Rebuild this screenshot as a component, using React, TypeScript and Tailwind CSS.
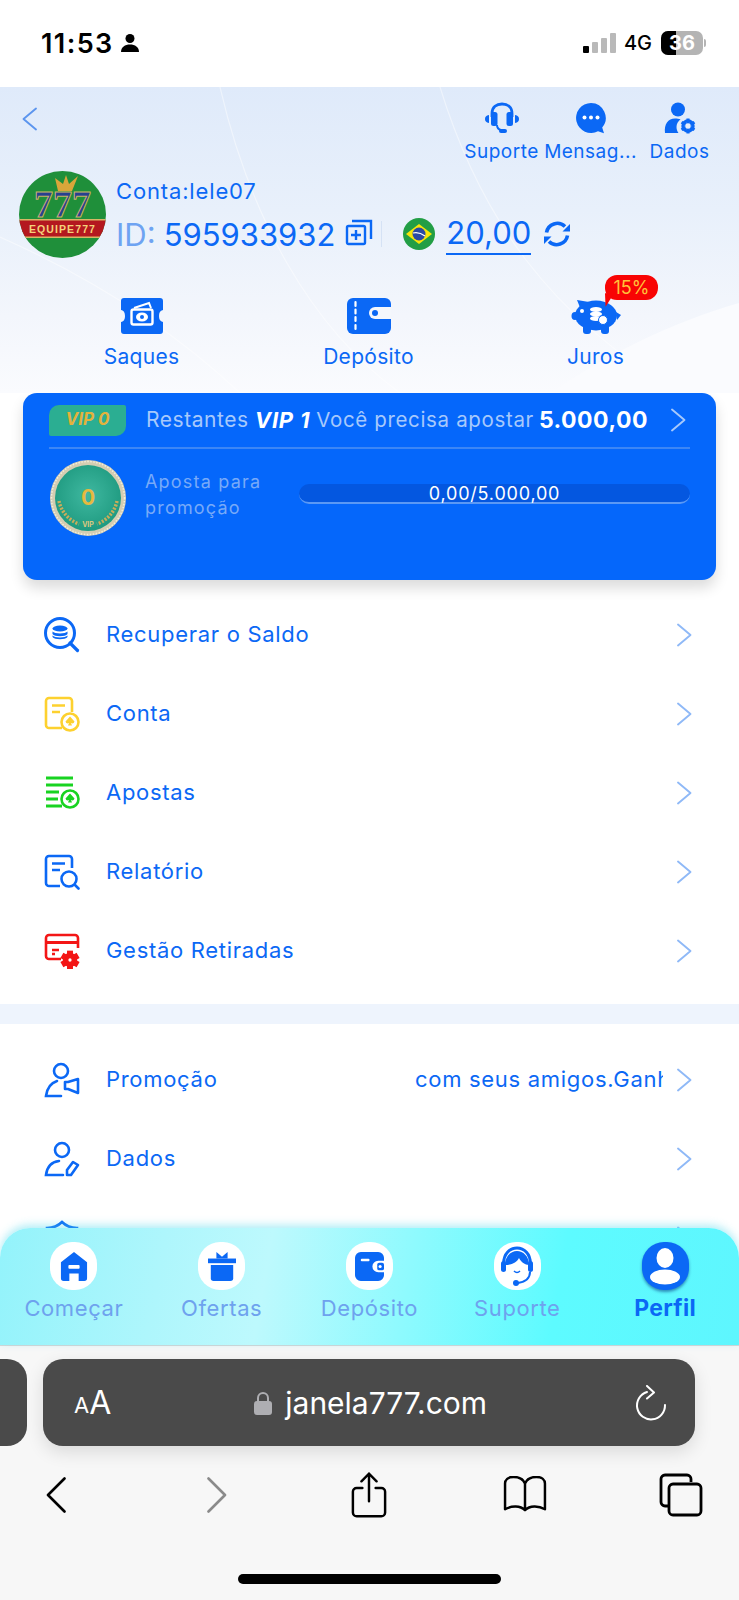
import type { ReactNode } from "react";

const BLUE = "#0b68f5";

function Chev({ dir = "right", className = "" }: { dir?: "left" | "right"; className?: string }) {
  return (
    <svg viewBox="0 0 16 24" className={`h-[24px] w-[16px] shrink-0 ${className}`} fill="none" stroke="currentColor" strokeWidth="1.900" strokeLinecap="round" strokeLinejoin="round">
      <path d={dir === "right" ? "M2 1.500L14.500 12 2 22.500" : "M14 1.500L1.500 12 14 22.500"} />
    </svg>
  );
}

function Headset() {
  return (
    <svg viewBox="0 0 36 32" className="h-[32px] w-[36px]" fill={BLUE}>
      <path d="M8 15V11.500C8 5 12.500 2 18 2s10 3 10 9.500V15" fill="none" stroke={BLUE} strokeWidth="2.800" />
      <rect x="7" y="10" width="6.500" height="14" rx="2.500" />
      <rect x="22.500" y="10" width="6.500" height="14" rx="2.500" />
      <path d="M1 17c0-2 1-3.500 4-4v8c-3-.5-4-2-4-4zM35 17c0-2-1-3.500-4-4v8c3-.5 4-2 4-4z" />
      <path d="M13 23c0 3 2 4.500 4 5" fill="none" stroke={BLUE} strokeWidth="2" />
      <rect x="15" y="27" width="8" height="4" rx="2" />
    </svg>
  );
}

function Bubble() {
  return (
    <svg viewBox="0 0 32 32" className="h-[32px] w-[32px]">
      <path d="M16 1a15 15 0 1 0 7 28.300l6 1.900-1.800-5.600A15 15 0 0 0 16 1z" fill={BLUE} />
      <circle cx="9.500" cy="15.500" r="2" fill="#fff" />
      <circle cx="16" cy="15.500" r="2" fill="#fff" />
      <circle cx="22.500" cy="15.500" r="2" fill="#fff" />
    </svg>
  );
}

function Gear({ x, y, r, color = BLUE, hole = "#e6eefa" }: { x: number; y: number; r: number; color?: string; hole?: string }) {
  return (
    <g>
      <circle cx={x} cy={y} r={r * 0.78} fill="none" stroke={color} strokeWidth={r * 0.5} />
      {[0, 60, 120].map((a) => (
        <rect key={a} x={x - r * 0.24} y={y - r * 1.15} width={r * 0.48} height={r * 2.3} fill={color} transform={`rotate(${a} ${x} ${y})`} />
      ))}
      <circle cx={x} cy={y} r={r * 0.42} fill={hole} />
    </g>
  );
}

function UserGear() {
  return (
    <svg viewBox="0 0 32 32" className="h-[32px] w-[32px]">
      <circle cx="14" cy="7.500" r="7" fill={BLUE} />
      <path d="M1 31c-1-9 3-14.500 10-14.500 2 0 4 .2 5.500.8-2.500 2-4 4.700-4 7.700 0 2.300.8 4.500 2 6z" fill={BLUE} />
      <Gear x={24} y={24} r={6.500} />
    </svg>
  );
}

function Copy() {
  return (
    <svg viewBox="0 0 28 28" className="h-[28px] w-[28px]" fill="none" stroke={BLUE} strokeWidth="2.400">
      <rect x="2" y="8" width="18" height="18" rx="1.500" />
      <path d="M7 3h19v18" />
      <path d="M11 12v10M6 17h10" />
    </svg>
  );
}

function Flag() {
  return (
    <svg viewBox="0 0 32 32" className="h-[32px] w-[32px]">
      <circle cx="16" cy="16" r="16" fill="#229e45" />
      <path d="M16 6l13 10-13 10L3 16z" fill="#f8e509" />
      <circle cx="16" cy="16" r="6.500" fill="#2b49a3" />
      <path d="M10 15c4-1 8 0 12 3" stroke="#fff" strokeWidth="1.200" fill="none" />
    </svg>
  );
}

function Refresh() {
  return (
    <svg viewBox="0 0 28 28" className="h-[28px] w-[28px]" fill="none" stroke={BLUE} strokeWidth="3.600">
      <path d="M3.500 12.500A11 11 0 0 1 22 6.500" />
      <path d="M24.500 15.500A11 11 0 0 1 6 21.500" />
      <path d="M27 4v7.500h-7.500z" fill={BLUE} stroke="none" />
      <path d="M1 24V16.500h7.500z" fill={BLUE} stroke="none" />
    </svg>
  );
}

function Avatar() {
  return (
    <svg viewBox="0 0 87 87" className="h-[87px] w-[87px] shrink-0">
      <defs>
        <clipPath id="avatar-clip">
          <circle cx="43.500" cy="43.500" r="43.500" />
        </clipPath>
      </defs>
      <g clipPath="url(#avatar-clip)">
        <rect width="87" height="87" fill="#1f8f3a" />
        <path d="M39 20l-3-13 8 6 3-9 3 9 9-8-6 15z" fill="#d9a63a" />
        <text x="43.500" y="46" textAnchor="middle" fontFamily="'Liberation Serif', serif" fontWeight="700" fontSize="38" fill="#27408f" stroke="#c9b368" strokeWidth="1">
          777
        </text>
        <rect x="0" y="49" width="87" height="17" fill="#b4181f" />
        <rect x="0" y="48" width="87" height="1.500" fill="#d7b765" />
        <rect x="0" y="65.500" width="87" height="1.500" fill="#d7b765" />
        <text x="43.500" y="61.500" textAnchor="middle" fontFamily="'Liberation Sans', sans-serif" fontWeight="700" fontSize="10.500" letterSpacing="1.100" fill="#f4d27a">
          EQUIPE777
        </text>
      </g>
    </svg>
  );
}

function Ticket() {
  return (
    <svg viewBox="0 0 44 36" className="h-[36px] w-[44px]">
      <path d="M4 0h36a3 3 0 0 1 3 3v9c-3 .5-4 3-4 6s1 5.500 4 6v9a3 3 0 0 1-3 3H4a3 3 0 0 1-3-3v-9c3-.5 4-3 4-6s-1-5.500-4-6V3a3 3 0 0 1 3-3z" fill={BLUE} />
      <path d="M14 10l15-5 2 5" fill="none" stroke="#fff" strokeWidth="2" />
      <rect x="11.500" y="11.500" width="21" height="15" rx="2" fill={BLUE} stroke="#fff" strokeWidth="2.400" />
      <ellipse cx="22" cy="19" rx="6" ry="4.500" fill="#fff" />
      <circle cx="22" cy="19" r="2" fill={BLUE} />
    </svg>
  );
}

function WalletIcon() {
  return (
    <svg viewBox="0 0 44 36" className="h-[36px] w-[44px]">
      <rect width="44" height="36" rx="6" fill={BLUE} />
      <path d="M44 9H28a6 6 0 0 0 0 12h16z" fill="#f4f7fc" />
      <circle cx="28" cy="15" r="3" fill={BLUE} />
      <path d="M8.500 4v4M8.500 11.500v4M8.500 19v4M8.500 27v4" stroke="#fff" strokeWidth="2.200" strokeLinecap="round" />
    </svg>
  );
}

function Piggy() {
  return (
    <svg viewBox="0 0 50 38" className="h-[38px] w-[50px]">
      <ellipse cx="25" cy="18.500" rx="21" ry="15" fill={BLUE} />
      <path d="M6 3l12 2-8 8z" fill={BLUE} />
      <rect x="12" y="26" width="8" height="11" rx="3" fill={BLUE} />
      <rect x="30" y="26" width="8" height="11" rx="3" fill={BLUE} />
      <ellipse cx="4" cy="19" rx="3.500" ry="4" fill={BLUE} />
      <path d="M45 15l5 3-4 5z" fill={BLUE} />
      <circle cx="11" cy="14" r="2" fill="#fff" />
      <ellipse cx="25" cy="12.500" rx="6" ry="2.400" fill="#fff" />
      <ellipse cx="25" cy="17" rx="6" ry="2.400" fill="#fff" />
      <ellipse cx="25" cy="21.500" rx="6" ry="2.400" fill="#fff" />
      <circle cx="32" cy="23" r="4.500" fill="#fff" stroke={BLUE} strokeWidth="1" />
    </svg>
  );
}

function Medal() {
  return (
    <svg viewBox="0 0 78 78" className="h-[78px] w-[78px] shrink-0">
      <defs>
        <radialGradient id="medal-fill" cx="50%" cy="45%" r="55%">
          <stop offset="0%" stopColor="#3fb8a0" />
          <stop offset="100%" stopColor="#1f9a80" />
        </radialGradient>
      </defs>
      <circle cx="39" cy="39" r="38" fill="#d4cdb2" />
      <circle cx="39" cy="39" r="36.500" fill="none" stroke="#f3eedd" strokeWidth="1.500" strokeDasharray="1.500 1.500" />
      <circle cx="39" cy="39" r="33" fill="url(#medal-fill)" />
      <path d="M10 42c2 10 9 19 20 23M68 42c-2 10-9 19-20 23" fill="none" stroke="#c9ad5a" strokeWidth="3.500" strokeDasharray="2 1.500" />
      <text x="39" y="46" textAnchor="middle" fontFamily="Inter, sans-serif" fontWeight="700" fontSize="21" fill="#e6b93f">
        0
      </text>
      <text x="39" y="68" textAnchor="middle" fontFamily="Inter, sans-serif" fontWeight="700" fontSize="7" fill="#d9c77f">
        VIP
      </text>
    </svg>
  );
}

function IconSearchCoins() {
  return (
    <svg viewBox="0 0 36 36" className="h-[36px] w-[36px]" fill="none" stroke={BLUE}>
      <circle cx="16" cy="16" r="14.500" strokeWidth="3" />
      <path d="M26 26l7.500 7.500" strokeWidth="3.200" strokeLinecap="round" />
      <ellipse cx="16" cy="11.500" rx="7.500" ry="3" fill={BLUE} stroke="none" />
      <path d="M8.500 14.500c2 2.500 13 2.500 15 0v2.500c-2 3-13 3-15 0zM8.500 18.500c2 2.500 13 2.500 15 0V20c-2 3-13 3-15 0z" fill={BLUE} stroke="none" />
    </svg>
  );
}

function Spade({ x, y, color }: { x: number; y: number; color: string }) {
  return <path d={`M${x} ${y - 4.500}l4.500 5a2.500 2.500 0 0 1-3.500 1.500l1 2.500h-4l1-2.500a2.500 2.500 0 0 1-3.500-1.500z`} fill={color} stroke="none" />;
}

function IconDocCoin() {
  const c = "#fdd12f";
  return (
    <svg viewBox="0 0 36 36" className="h-[36px] w-[36px]" fill="none" stroke={c} strokeWidth="2.600">
      <path d="M18 32H5a3 3 0 0 1-3-3V5a3 3 0 0 1 3-3h20a3 3 0 0 1 3 3v11" />
      <path d="M8 9.500h13M8 16h8" />
      <circle cx="26" cy="26" r="8.500" />
      <Spade x={26} y={25} color={c} />
    </svg>
  );
}

function IconListCoin() {
  const c = "#18d321";
  return (
    <svg viewBox="0 0 36 36" className="h-[36px] w-[36px]" fill="none" stroke={c} strokeWidth="3">
      <path d="M2 3h27M2 10h27M2 17h13M2 24h12M2 31h16" />
      <circle cx="26" cy="24" r="8.500" strokeWidth="2.600" />
      <Spade x={26} y={23} color={c} />
    </svg>
  );
}

function IconDocSearch() {
  return (
    <svg viewBox="0 0 36 36" className="h-[36px] w-[36px]" fill="none" stroke={BLUE} strokeWidth="2.600">
      <path d="M16 32H5a3 3 0 0 1-3-3V5a3 3 0 0 1 3-3h20a3 3 0 0 1 3 3v9" />
      <path d="M8 9.500h13M8 16h8" />
      <circle cx="25" cy="25" r="7.500" />
      <path d="M31 31l3.500 3.500" strokeLinecap="round" />
    </svg>
  );
}

function IconCardGear() {
  const c = "#f31616";
  return (
    <svg viewBox="0 0 36 36" className="h-[36px] w-[36px]" fill="none" stroke={c} strokeWidth="2.600">
      <path d="M17 26H5a3 3 0 0 1-3-3V5a3 3 0 0 1 3-3h26a3 3 0 0 1 3 3v10" />
      <path d="M2 9.500h32" strokeWidth="3" />
      <path d="M8 17h7M8 21h3" />
      <Gear x={26} y={27} r={7} color={c} hole="#fff" />
    </svg>
  );
}

function IconUserHorn() {
  return (
    <svg viewBox="0 0 36 36" className="h-[36px] w-[36px]" fill="none" stroke={BLUE} strokeWidth="2.600">
      <circle cx="17" cy="9" r="7" />
      <path d="M13 19c-6 2-10 7-11 15h15" strokeLinecap="round" />
      <path d="M24 20l10-3v14l-10-4h-3v-7z" strokeLinejoin="round" />
    </svg>
  );
}

function IconUserPen() {
  return (
    <svg viewBox="0 0 36 36" className="h-[36px] w-[36px]" fill="none" stroke={BLUE} strokeWidth="2.600">
      <circle cx="18" cy="9" r="7" />
      <path d="M15 20C7 21 3 26 2 34h17" strokeLinecap="round" />
      <path d="M29 21l5 3-7 10h-4v-5z" strokeLinejoin="round" />
    </svg>
  );
}

function IconShield() {
  return (
    <svg viewBox="0 0 36 36" className="h-[36px] w-[36px]" fill="none" stroke={BLUE} strokeWidth="2.600">
      <path d="M3 8c6 0 11-2 15-6 4 4 9 6 15 6v12c0 8-7 12-15 15C10 32 3 28 3 20z" />
    </svg>
  );
}

function Row({ icon, label, extra }: { icon: ReactNode; label?: string; extra?: ReactNode }) {
  return (
    <div className="flex h-[79px] items-center pl-[44px] pr-[47px]">
      <div className="w-[62px] shrink-0">{icon}</div>
      {label && <span className="text-[22px] tracking-[0.7px] text-[#0b68f5]">{label}</span>}
      <div className="min-w-0 flex-1">{extra}</div>
      <Chev className="text-[#8fb9f7]" />
    </div>
  );
}

function HeaderAction({ icon, label }: { icon: ReactNode; label: string }) {
  return (
    <div className="flex w-[89px] flex-col items-center">
      {icon}
      <span className="mt-[6px] whitespace-nowrap text-[19px] leading-[24px] tracking-[0.5px]">{label}</span>
    </div>
  );
}

function QuickAction({ icon, label, children }: { icon: ReactNode; label: string; children?: ReactNode }) {
  return (
    <div className="relative flex flex-col items-center">
      <div className="flex h-[36px] items-center">{icon}</div>
      <span className="mt-[9px] text-[21px] leading-[28px] tracking-[0.3px]">{label}</span>
      {children}
    </div>
  );
}

const navItems: { label: string; icon: ReactNode }[] = [
  {
    label: "Começar",
    icon: (
      <svg viewBox="0 0 30 32" className="h-[30px] w-[28px]" fill={BLUE}>
        <path d="M15 1l14 11v17a3 3 0 0 1-3 3h-6v-8H10v8H4a3 3 0 0 1-3-3V12z" />
        <rect x="9" y="15" width="12" height="4" rx="1" fill="#fff" />
      </svg>
    ),
  },
  {
    label: "Ofertas",
    icon: (
      <svg viewBox="0 0 30 32" className="h-[30px] w-[28px]" fill={BLUE}>
        <path d="M9 1l6 5 6-5v7H9z" />
        <rect x="0" y="8" width="30" height="5" />
        <path d="M3 15h24v14a3 3 0 0 1-3 3H6a3 3 0 0 1-3-3z" />
      </svg>
    ),
  },
  {
    label: "Depósito",
    icon: (
      <svg viewBox="0 0 30 30" className="h-[29px] w-[29px]" fill={BLUE}>
        <path d="M6 0h18a6 6 0 0 1 6 6v3h-6a6 6 0 0 0 0 12h6v3a6 6 0 0 1-6 6H6a6 6 0 0 1-6-6V6a6 6 0 0 1 6-6z" />
        <rect x="6" y="7" width="9" height="2.500" rx="1" fill="#fff" />
        <rect x="23" y="11" width="7" height="8" rx="2" />
        <circle cx="26" cy="15" r="1.600" fill="#fff" />
      </svg>
    ),
  },
  {
    label: "Suporte",
    icon: (
      <svg viewBox="0 0 40 42" className="h-[42px] w-[40px]">
        <path d="M7 22C5 8 14 3 20 3s15 5 13 19" fill="none" stroke={BLUE} strokeWidth="3" />
        <path d="M8 20c0-9 6-14 12-14s12 5 12 14c-4 0-8-3-10-7-2 4-7 7-14 7z" fill={BLUE} />
        <rect x="4" y="16" width="5" height="11" rx="2.500" fill={BLUE} />
        <rect x="31" y="16" width="5" height="11" rx="2.500" fill={BLUE} />
        <path d="M33 27c0 7-6 10-12 11" fill="none" stroke={BLUE} strokeWidth="2" />
        <circle cx="19" cy="38" r="3" fill={BLUE} />
        <path d="M17 26c2 2 4 2 6 0" fill="none" stroke={BLUE} strokeWidth="1.500" />
      </svg>
    ),
  },
  {
    label: "Perfil",
    icon: (
      <svg viewBox="0 0 36 40" className="h-[40px] w-[36px]" fill="#fff">
        <ellipse cx="18" cy="12" rx="8.500" ry="10" />
        <ellipse cx="18" cy="31" rx="15" ry="7.500" />
      </svg>
    ),
  },
];

export default function App() {
  return (
    <div className="flex h-[1600px] w-[739px] flex-col overflow-hidden bg-white font-['Inter',sans-serif] text-[#0b68f5]">
      {/* status bar */}
      <div className="flex h-[87px] shrink-0 items-center pb-[1px] pl-[41px] pr-[33px] text-black">
        <span className="text-[27px] font-semibold leading-none tracking-[1.400px]">11:53</span>
        <svg viewBox="0 0 20 20" className="ml-[6px] h-[20px] w-[20px]" fill="#000">
          <circle cx="10" cy="5.500" r="4.500" />
          <path d="M1 19c0-5 4-7.500 9-7.500s9 2.500 9 7.500z" />
        </svg>
        <div className="flex-1" />
        <div className="flex h-[20px] items-end gap-[3px]">
          <div className="h-[7px] w-[6px] rounded-[1px] bg-black" />
          <div className="h-[11px] w-[6px] rounded-[1px] bg-[#b9b9b9]" />
          <div className="h-[15px] w-[6px] rounded-[1px] bg-[#b9b9b9]" />
          <div className="h-[20px] w-[6px] rounded-[1px] bg-[#b9b9b9]" />
        </div>
        <span className="ml-[8px] text-[20px] font-medium leading-none">4G</span>
        <div className="relative ml-[9px] flex h-[24px] w-[42px] items-center justify-center overflow-hidden rounded-[7px] bg-[#b4b4b4] text-[20px] font-bold leading-none text-white">
          <div className="absolute inset-y-0 left-0 w-[15px] bg-black" />
          <span className="relative">36</span>
        </div>
        <div className="ml-[1px] h-[8px] w-[2px] rounded-r-full bg-[#b4b4b4]" />
      </div>

      {/* scrolling content */}
      <div className="h-[1173px] shrink-0 overflow-hidden">
        <div className="relative flex h-[306px] flex-col bg-[linear-gradient(180deg,#dfeafa_0%,#e8f0fb_40%,#f3f6fc_75%,#fafbfe_100%)]">
          <svg viewBox="0 0 739 306" className="pointer-events-none absolute inset-0 h-full w-full" fill="none">
            <path d="M220 0c30 130 90 240 180 306" stroke="#ffffff" strokeOpacity="0.45" strokeWidth="1.200" />
            <path d="M440 0c40 130 110 230 240 306" stroke="#ffffff" strokeOpacity="0.45" strokeWidth="1.200" />
            <path d="M0 150c90 40 170 90 240 156" stroke="#ffffff" strokeOpacity="0.45" strokeWidth="1.200" />
            <path d="M550 306c60-40 120-70 189-90v90z" fill="#fafbfe" />
          </svg>

          <div className="relative flex h-[84px] shrink-0 justify-between pl-[22px] pr-[15px] pt-[15px]">
            <Chev dir="left" className="mt-[5px] text-[#5c95ee]" />
            <div className="flex">
              <HeaderAction icon={<Headset />} label="Suporte" />
              <HeaderAction icon={<Bubble />} label="Mensag..." />
              <HeaderAction icon={<UserGear />} label="Dados" />
            </div>
          </div>

          <div className="relative flex shrink-0 items-start pl-[19px]">
            <Avatar />
            <div className="ml-[10px] mt-[5px] flex flex-col">
              <span className="text-[22px] leading-[30px] tracking-[0.85px]">Conta:lele07</span>
              <div className="mt-[8px] flex h-[40px] items-center">
                <span className="text-[31px] leading-none text-[#6ea3f2]">ID:</span>
                <span className="ml-[8px] text-[31px] leading-none">595933932</span>
                <div className="mb-[4px] ml-[10px]">
                  <Copy />
                </div>
                <div className="ml-[8px] h-[26px] w-px bg-[#d5e2f5]" />
                <div className="ml-[21px]">
                  <Flag />
                </div>
                <span className="ml-[11px] mt-[2px] border-b-2 border-[#0b68f5] pb-[3px] text-[31px] leading-[34px]">20,00</span>
                <div className="ml-[12px]">
                  <Refresh />
                </div>
              </div>
            </div>
          </div>

          <div className="relative ml-[28px] mt-[40px] grid w-[681px] grid-cols-3">
            <QuickAction icon={<Ticket />} label="Saques" />
            <QuickAction icon={<WalletIcon />} label="Depósito" />
            <QuickAction icon={<Piggy />} label="Juros">
              <div className="absolute left-[123px] top-[-23px] flex h-[25px] w-[53px] items-center justify-center rounded-[12px] bg-[#f80404] text-[18px] leading-none text-[#ffc23a]">
                15%
                <svg viewBox="0 0 8 12" className="absolute left-0 top-[18px] h-[14px] w-[9px]" fill="#f80404">
                  <path d="M0 0h8L0.500 12z" />
                </svg>
              </div>
            </QuickAction>
          </div>
        </div>

        {/* vip card */}
        <div className="mx-[23px] h-[187px] rounded-[14px] bg-[#0567fb] px-[26px] shadow-[0_8px_14px_rgba(0,0,0,0.14)]">
          <div className="flex h-[56px] items-center border-b-2 border-[#3c86f5]">
            <div className="flex h-[31px] w-[77px] shrink-0 items-center justify-center rounded-bl-[2px] rounded-br-[10px] rounded-tl-[10px] rounded-tr-[2px] bg-[#2bae92] text-[17px] font-bold italic text-[#e3b23c]">
              VIP 0
            </div>
            <span className="ml-[20px] text-[21px] tracking-[0.55px] text-[#a7c9fb]">Restantes</span>
            <span className="ml-[6px] text-[22px] font-bold italic tracking-[0.8px] text-white">VIP 1</span>
            <span className="ml-[6px] text-[20.500px] tracking-[0.65px] text-[#a7c9fb]">Você precisa apostar</span>
            <span className="ml-[5px] text-[23px] font-bold tracking-[0.5px] text-white">5.000,00</span>
            <Chev className="ml-auto mr-[4px] text-[#a7c9fb]" />
          </div>
          <div className="mt-[10px] flex items-start">
            <Medal />
            <div className="ml-[18px] mt-[10px] w-[154px] text-[18px] leading-[26px] tracking-[1.200px] text-[#78aaf8]">Aposta para promoção</div>
            <div className="mt-[25px] flex h-[20px] flex-1 items-center justify-center rounded-full border-b-2 border-[#5b99f5] bg-[#0457e0] pt-[2px] text-[18px] leading-none tracking-[0.8px] text-white">
              0,00/5.000,00
            </div>
          </div>
        </div>

        <div className="mt-[15px]">
          <Row icon={<IconSearchCoins />} label="Recuperar o Saldo" />
          <Row icon={<IconDocCoin />} label="Conta" />
          <Row icon={<IconListCoin />} label="Apostas" />
          <Row icon={<IconDocSearch />} label="Relatório" />
          <Row icon={<IconCardGear />} label="Gestão Retiradas" />
        </div>

        <div className="mb-[16px] mt-[14px] h-[20px] bg-[#eef4fd]" />

        <Row
          icon={<IconUserHorn />}
          label="Promoção"
          extra={
            <div className="ml-auto mr-[13px] w-[248px] overflow-hidden whitespace-nowrap text-[22px] tracking-[0.7px]">
              com seus amigos.Ganhe
            </div>
          }
        />
        <Row icon={<IconUserPen />} label="Dados" />
        <Row icon={<IconShield />} />
      </div>

      {/* tab bar */}
      <div className="relative z-10 mt-[-32px] flex h-[117px] shrink-0 rounded-t-[30px] bg-[linear-gradient(100deg,#93f3fb_0%,#aef6fc_22%,#bdf9fd_36%,#8efafe_55%,#5dfbff_75%,#5ef6fe_100%)] pt-[14px] shadow-[0_-3px_8px_rgba(80,215,235,0.45)]">
        {navItems.map((item) => {
          const active = item.label === "Perfil";
          return (
            <div key={item.label} className="flex flex-1 flex-col items-center">
              <div className={`flex h-[48px] w-[47px] items-center justify-center rounded-[22px] ${active ? "bg-[#0b68f5] shadow-[0_2px_3px_rgba(0,40,120,0.5)]" : "bg-white"}`}>{item.icon}</div>
              <span className={`mt-[4px] text-[22px] leading-[28px] ${active ? "text-[23px] font-bold tracking-[0.3px] text-[#0b68f5]" : "tracking-[0.6px] text-[#6ea2ee]"}`}>{item.label}</span>
            </div>
          );
        })}
      </div>

      {/* safari chrome */}
      <div className="relative flex-1 border-t border-[#d6d6d6] bg-[#f7f7f7]">
        <div className="mt-[13px] flex h-[87px] gap-[16px]">
          <div className="ml-[-40px] w-[67px] rounded-[20px] bg-[#4a4a4a]" />
          <div className="flex w-[652px] items-center rounded-[20px] bg-[#4a4a4a] pl-[31px] pr-[28px] text-white shadow-[0_6px_18px_rgba(0,0,0,0.12)]">
            <span className="mt-[4px] text-[22px] leading-none">A</span>
            <span className="text-[32px] leading-none">A</span>
            <div className="ml-[143px] flex items-center">
              <svg viewBox="0 0 18 24" className="h-[24px] w-[18px]" fill="#aeaeb2">
                <path d="M4 11V7a5 5 0 0 1 10 0v4" fill="none" stroke="#aeaeb2" strokeWidth="2" />
                <rect x="0" y="10" width="18" height="14" rx="3" />
              </svg>
              <span className="ml-[13px] text-[30px] leading-none">janela777.com</span>
            </div>
            <svg viewBox="0 0 32 36" className="ml-auto h-[36px] w-[32px]" fill="none" stroke="#fff" strokeWidth="2" strokeLinecap="round" strokeLinejoin="round">
              <path d="M12 7A14 14 0 1 0 30 20" />
              <path d="M12 1l7 6.500-7 6" />
            </svg>
          </div>
        </div>
        <div className="mt-[24px] flex h-[50px] items-center pl-[46px] text-black">
          <svg viewBox="0 0 20 36" className="h-[36px] w-[20px]" fill="none" stroke="#000" strokeWidth="2.600" strokeLinecap="round" strokeLinejoin="round">
            <path d="M18.500 1.500L2 18l16.500 16.500" />
          </svg>
          <svg viewBox="0 0 20 36" className="ml-[141px] h-[36px] w-[20px]" fill="none" stroke="#8a8a8a" strokeWidth="2.600" strokeLinecap="round" strokeLinejoin="round">
            <path d="M1.500 1.500L18 18 1.500 34.500" />
          </svg>
          <svg viewBox="0 0 38 48" className="ml-[124px] h-[47px] w-[36px]" fill="none" stroke="#000" strokeWidth="2.600" strokeLinecap="round">
            <path d="M12 16H6a4 4 0 0 0-4 4v22a4 4 0 0 0 4 4h26a4 4 0 0 0 4-4V20a4 4 0 0 0-4-4h-6" />
            <path d="M19 30V2M11 9l8-8 8 8" />
          </svg>
          <svg viewBox="0 0 46 40" className="ml-[115px] h-[38px] w-[46px]" fill="none" stroke="#000" strokeWidth="2.600" strokeLinejoin="round">
            <path d="M23 36C18 31 9 31 2 35V8c0-4 3-7 9-7 6 0 10 2 12 7 2-5 6-7 12-7 6 0 9 3 9 7v27c-7-4-16-4-21 1zM23 8v28" />
          </svg>
          <svg viewBox="0 0 44 44" className="ml-[111px] h-[44px] w-[44px]" fill="none" stroke="#000" strokeWidth="2.800">
            <path d="M9 33H6a4 4 0 0 1-4-4V6a4 4 0 0 1 4-4h22a4 4 0 0 1 4 4v3" />
            <rect x="10" y="11" width="32" height="31" rx="4" />
          </svg>
        </div>
        <div className="absolute bottom-[16px] left-[238px] h-[10px] w-[263px] rounded-full bg-black" />
      </div>
    </div>
  );
}
